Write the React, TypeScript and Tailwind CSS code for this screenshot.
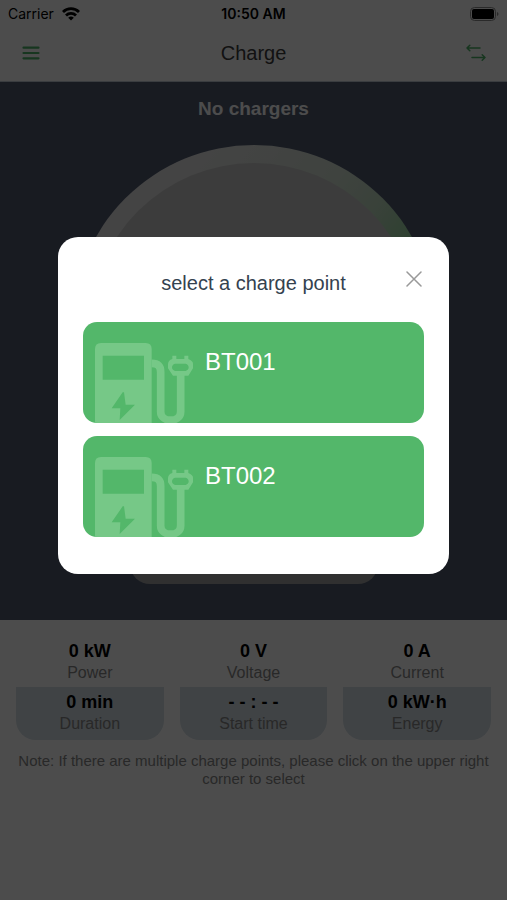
import { useState } from 'react';

const stats = [
  { id: 1, value: '0 kW', label: 'Power', subValue: '0 min', subLabel: 'Duration' },
  { id: 2, value: '0 V', label: 'Voltage', subValue: '- - : - -', subLabel: 'Start time' },
  { id: 3, value: '0 A', label: 'Current', subValue: '0 kW·h', subLabel: 'Energy' },
];

const chargePoints = ['BT001', 'BT002'];

function StatusBar() {
  return (
    <div className="grid h-7 grid-cols-3 items-center px-2 font-['Inter',sans-serif] text-sm text-black">
      <div className="flex items-center gap-2">
        <span>Carrier</span>
        <svg className="h-3.5 w-[18px]" viewBox="0 0 18 14" fill="none" stroke="currentColor" strokeWidth="2.8">
          <path d="M1 5a11.4 11.4 0 0 1 16 0" />
          <path d="M4 8.400a7.100 7.100 0 0 1 10 0" />
          <path d="M9 13.600 6.200 10.800a4 4 0 0 1 5.600 0Z" fill="currentColor" stroke="none" />
        </svg>
      </div>
      <span className="text-center font-semibold whitespace-nowrap">10:50 AM</span>
      <svg className="h-3.5 w-[29px] justify-self-end" viewBox="0 0 29 14">
        <rect x="0.5" y="0.5" width="25" height="13" rx="4" fill="none" stroke="#8c8c8c" />
        <rect x="2" y="2" width="22" height="10" rx="2" fill="#000" />
        <path d="M27 5v4q1.500-.6 1.500-2T27 5Z" fill="#8c8c8c" />
      </svg>
    </div>
  );
}

function NavBar() {
  return (
    <div className="flex h-[54px] items-center justify-between border-b border-[#c4ced6] px-[19px] pb-1">
      <button className="flex w-6 justify-center text-[#4fb56a]" aria-label="Menu">
        <svg className="h-4 w-[18px]" viewBox="0 0 18 16" stroke="currentColor" strokeWidth="2.200" strokeLinecap="round">
          <path d="M1.500 2.700h15M1.500 8h15M1.500 13.300h15" />
        </svg>
      </button>
      <h1 className="text-xl text-[#3c3c3c]">Charge</h1>
      <button className="flex w-6 justify-center text-[#4fb56a]" aria-label="Switch charge point">
        <svg className="h-[18px] w-5" viewBox="0 0 20 18" fill="none" stroke="currentColor" strokeWidth="1.500" strokeLinecap="round" strokeLinejoin="round">
          <path d="M14 4H1M3.800 1.200l-2.800 2.800 2.800 2.800" />
          <path d="M6 13.500H19M16.200 10.700l2.800 2.800-2.800 2.800" />
        </svg>
      </button>
    </div>
  );
}

function Gauge() {
  return (
    <svg className="h-[364px] w-[364px]" viewBox="0 0 364 364">
      <defs>
        <linearGradient id="ring" gradientUnits="userSpaceOnUse" x1="120" y1="-20" x2="320" y2="125">
          <stop offset="0.1" stopColor="#e4e4e4" />
          <stop offset="0.6" stopColor="#d3e0d3" />
          <stop offset="0.8" stopColor="#c0dcc2" />
          <stop offset="1" stopColor="#98d8a0" />
        </linearGradient>
      </defs>
      <circle cx="182" cy="182" r="182" fill="url(#ring)" />
      <circle cx="182" cy="182" r="164" fill="#c9c9c9" />
    </svg>
  );
}

function PumpIcon() {
  return (
    <svg className="h-20 w-[98px] shrink-0" viewBox="0 0 294 240" fill="#76c887">
      <path
        fillRule="evenodd"
        d="M18 0H152q18 0 18 18V240H0V18Q0 0 18 0ZM23 38V110H147V38ZM83 148 50 196H76L74 231 120 185H92L87 148Z"
      />
      <path d="M170 61c18 0 27 8 27 26V206c0 34 60 34 60 0V92" fill="none" stroke="#76c887" strokeWidth="23" />
      <path
        fillRule="evenodd"
        d="M232 48V38h12V48H268V38h12V48q14 6 14 14V76l-14 22H234L219 76V64q0-12 13-16ZM240 62q-9 3-9 11t9 11H272q9-3 9-11T272 62Z"
      />
    </svg>
  );
}

function ChargePointDialog({ onClose }: { onClose: () => void }) {
  return (
    <div className="fixed inset-0 flex items-center justify-center bg-black/70 px-[58px] pb-[89px]">
      <div role="dialog" aria-modal="true" aria-labelledby="dialog-title" className="relative w-full rounded-[20px] bg-white px-[25px] pt-8 pb-[37px]">
        <h2 id="dialog-title" className="text-center text-xl text-[#34424f]">
          select a charge point
        </h2>
        <button onClick={onClose} aria-label="Close" className="absolute top-8 right-[25px] flex h-5 w-5 items-center justify-center text-[#999]">
          <svg className="h-4 w-4" viewBox="0 0 16 16" stroke="currentColor" strokeWidth="1.500" strokeLinecap="round">
            <path d="M1 1l14 14M15 1L1 15" />
          </svg>
        </button>
        <div className="mt-[25px] flex flex-col gap-[13px]">
          {chargePoints.map((name) => (
            <button
              key={name}
              onClick={onClose}
              className="flex h-[101px] items-start gap-3 overflow-hidden rounded-[14px] bg-[#53b76a] pt-[21px] pl-3 text-left text-white"
            >
              <PumpIcon />
              <span className="text-2xl leading-[38px]">{name}</span>
            </button>
          ))}
        </div>
      </div>
    </div>
  );
}

export default function App() {
  const [open, setOpen] = useState(true);

  return (
    <div className="flex min-h-screen flex-col bg-white font-['Liberation_Sans',Arial,sans-serif]">
      <StatusBar />
      <NavBar />

      <div className="flex flex-col items-center bg-[#505a70] pt-[15px] pb-9">
        <p className="text-[19px] leading-6 font-bold text-white">No chargers</p>
        <div className="mt-6">
          <Gauge />
        </div>
        <button
          onClick={() => setOpen(true)}
          aria-label="Start charging"
          className="mt-[25px] h-[50px] w-[248px] rounded-[20px] bg-[#a0a0a0]"
        />
      </div>

      <div className="grid grid-cols-3 gap-4 px-4">
        {stats.map((item) => (
          <div key={item.id} className="overflow-hidden rounded-b-[20px] text-center">
            <div className="pt-5 pb-[3px]">
              <p className="text-lg leading-[22px] font-bold text-black">{item.value}</p>
              <p className="text-base leading-[22px] text-[#888]">{item.label}</p>
            </div>
            <div className="bg-[#d5dfe6] pt-1 pb-[5px]">
              <p className="text-lg leading-[22px] font-bold text-black">{item.subValue}</p>
              <p className="text-base leading-[22px] text-[#888]">{item.subLabel}</p>
            </div>
          </div>
        ))}
      </div>

      <p className="mt-3 px-4 text-center text-[15px] leading-[18px] text-[#888]">
        Note: If there are multiple charge points, please click on the upper right corner to select
      </p>

      {open && <ChargePointDialog onClose={() => setOpen(false)} />}
    </div>
  );
}
